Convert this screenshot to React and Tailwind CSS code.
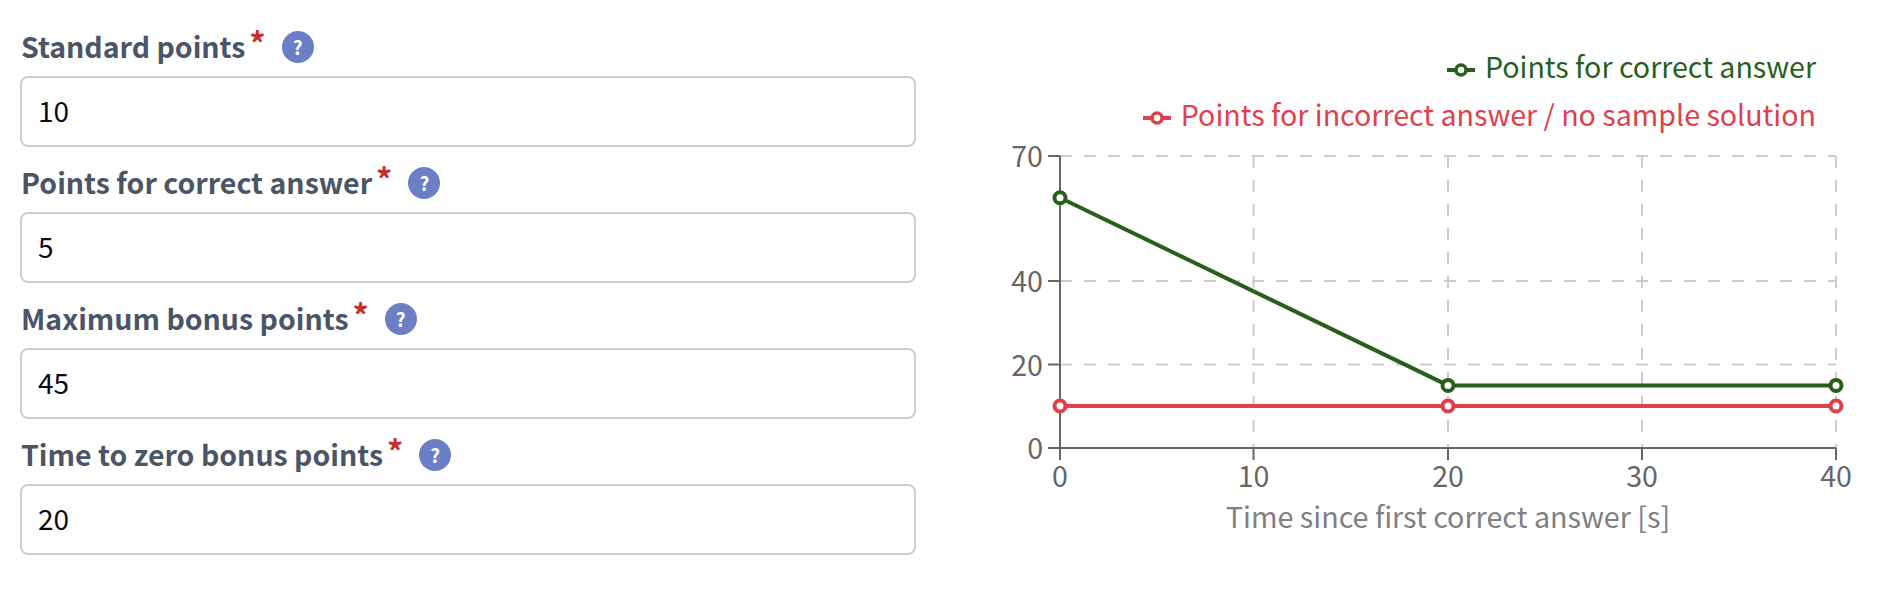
const font = { fontFamily: '"Noto Sans CJK SC", "Noto Sans", sans-serif' };

const fields = [
  ["Standard points", "10"],
  ["Points for correct answer", "5"],
  ["Maximum bonus points", "45"],
  ["Time to zero bonus points", "20"],
];

const GREEN = "#27601a";
const RED = "#df4049";

function Field({ label, value }) {
  return (
    <div className="flex flex-col">
      <div className="flex h-[36px] mb-[11px] items-center pl-[1px]">
        <span className="pb-[2px] text-[28.5px] leading-[34px] font-bold text-[#4a5568]">{label}</span>
        <span className="ml-[4px] self-start text-[32px] leading-[26px] font-bold text-[#c53030]">*</span>
        <span className="ml-[16px] flex h-[32px] w-[32px] items-center justify-center rounded-full bg-[#6b7fc7] pb-[1px] text-[19px] leading-none font-bold text-white">?</span>
      </div>
      <input
        readOnly
        value={value}
        className="h-[71px] w-full rounded-[8px] border-2 border-[#c8ced3] bg-white px-[16px] pb-[4px] text-[28px] leading-[40px] text-[#0a0a14] outline-none"
        style={font}
      />
    </div>
  );
}

function LegendRow({ color, children }) {
  return (
    <div className="flex h-[48px] items-center justify-end gap-[10px]" style={{ color }}>
      <svg width="28" height="14" viewBox="0 0 28 14">
        <line x1="0" y1="7" x2="28" y2="7" stroke={color} strokeWidth="4" />
        <circle cx="14" cy="7" r="5" fill="white" stroke={color} strokeWidth="3.5" />
      </svg>
      <span className="pb-[8px] text-[28.6px] leading-[40px]">{children}</span>
    </div>
  );
}

const xs = [[0, 1060], [10, 1253.5], [20, 1448], [30, 1642], [40, 1836]];
const ys = [[70, 156], [40, 281], [20, 364.5], [0, 448]];

function Chart() {
  return (
    <svg width="880" height="400" viewBox="980 142 880 400" className="block" style={font}>
      <g stroke="#cccccc" strokeWidth="2" strokeDasharray="12 12" fill="none">
        {ys.slice(0, 3).map(([v, y]) => (
          <line key={v} x1="1060" x2="1836" y1={y} y2={y} />
        ))}
        {xs.slice(1).map(([v, x]) => (
          <line key={v} x1={x} x2={x} y1="156" y2="448" />
        ))}
      </g>
      <g stroke="#666666" strokeWidth="2">
        <line x1="1060" x2="1060" y1="156" y2="448" />
        <line x1="1060" x2="1836" y1="448" y2="448" />
        {ys.map(([v, y]) => (
          <line key={v} x1="1048" x2="1060" y1={y} y2={y} />
        ))}
        {xs.map(([v, x]) => (
          <line key={v} x1={x} x2={x} y1="448" y2="460" />
        ))}
      </g>
      <g fill="#666666" fontSize="28.6">
        {ys.map(([v, y]) => (
          <text key={v} x="1043" y={y + 11} textAnchor="end">{v}</text>
        ))}
        {xs.map(([v, x]) => (
          <text key={v} x={x} y="487" textAnchor="middle">{v}</text>
        ))}
      </g>
      <text x="1448" y="528" textAnchor="middle" fontSize="28.7" fill="#808080">
        Time since first correct answer [s]
      </text>
      <polyline points="1060,406 1448,406 1836,406" fill="none" stroke={RED} strokeWidth="4" />
      <polyline points="1060,197.7 1448,385.4 1836,385.4" fill="none" stroke={GREEN} strokeWidth="4" />
      {[1060, 1448, 1836].map((x) => (
        <circle key={x} cx={x} cy="406" r="5.5" fill="white" stroke={RED} strokeWidth="4" />
      ))}
      {[[1060, 197.7], [1448, 385.4], [1836, 385.4]].map(([x, y]) => (
        <circle key={x} cx={x} cy={y} r="5.5" fill="white" stroke={GREEN} strokeWidth="4" />
      ))}
    </svg>
  );
}

export default function App() {
  return (
    <div className="flex h-[590px] w-[1900px] bg-white" style={font}>
      <div className="ml-[20px] flex w-[896px] flex-col gap-[18px] pt-[29px]">
        {fields.map(([l, v]) => (
          <Field key={l} label={l} value={v} />
        ))}
      </div>
      <div className="ml-[64px] w-[880px] pt-[46px]">
        <div className="pr-[44px]">
          <LegendRow color={GREEN}>Points for correct answer</LegendRow>
          <LegendRow color={RED}>Points for incorrect answer / no sample solution</LegendRow>
        </div>
        <Chart />
      </div>
    </div>
  );
}
